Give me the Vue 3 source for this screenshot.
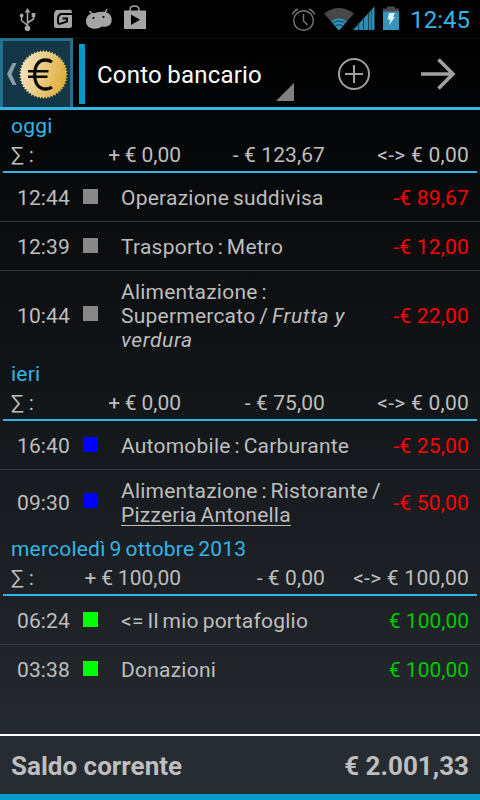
<script setup>
const groups = [
  {
    title: 'oggi', income: '+ € 0,00', expense: '- € 123,67', transfer: '<-> € 0,00',
    rows: [
      { time: '12:44', kind: 'grey', text: 'Operazione suddivisa', amount: '-€ 89,67' },
      { time: '12:39', kind: 'grey', text: 'Trasporto : Metro', amount: '-€ 12,00' },
      { time: '10:44', kind: 'grey', text: 'Alimentazione : Supermercato / ', note: 'Frutta y verdura', amount: '-€ 22,00' },
    ],
  },
  {
    title: 'ieri', income: '+ € 0,00', expense: '- € 75,00', transfer: '<-> € 0,00',
    rows: [
      { time: '16:40', kind: 'blue', text: 'Automobile : Carburante', amount: '-€ 25,00' },
      { time: '09:30', kind: 'blue', text: 'Alimentazione : Ristorante / ', payee: 'Pizzeria Antonella', amount: '-€ 50,00' },
    ],
  },
  {
    title: 'mercoledì 9 ottobre 2013', income: '+ € 100,00', expense: '- € 0,00', transfer: '<-> € 100,00',
    rows: [
      { time: '06:24', kind: 'green', text: '<= Il mio portafoglio', amount: '€ 100,00', positive: true },
      { time: '03:38', kind: 'green', text: 'Donazioni', amount: '€ 100,00', positive: true },
    ],
  },
]

const teeth = Array.from({ length: 96 }, (_, i) => {
  const angle = (i * Math.PI) / 48
  const radius = i % 2 ? 22.4 : 24.4
  return `${(24.5 + radius * Math.sin(angle)).toFixed(2)},${(24.5 - radius * Math.cos(angle)).toFixed(2)}`
}).join(' ')
</script>

<template>
  <div class="screen">
    <div class="status">
      <div class="notifications">
        <svg class="usb" width="18" height="26" viewBox="0 0 18 26">
          <path d="M8.500 4V21M2.500 10V13.500L8.500 18.500M14.500 9V12L8.500 16" fill="none" stroke="#a5a5a5" stroke-width="1.600" />
          <path d="M8.500 1L11.300 5.500H5.700Z" fill="#a5a5a5" />
          <circle cx="2.600" cy="8.500" r="1.900" fill="#a5a5a5" />
          <rect x="12.700" y="6" width="3.600" height="4" fill="#a5a5a5" />
          <circle cx="8.500" cy="21.300" r="2.800" fill="#a5a5a5" />
        </svg>
        <svg class="gadget" width="20" height="20" viewBox="0 0 20 20">
          <path d="M3 1L18 0.700L19 3V17Q19 19 17 19H3Q1 19 1 17V4Z" fill="#a5a5a5" />
          <path d="M19 5H8.500Q5.500 5.500 5 9V13Q5 15 7 14.800L14 12.500V9.500H9.500" fill="none" stroke="#000" stroke-width="1.900" />
        </svg>
        <svg class="droid" width="28" height="22" viewBox="0 0 28 22">
          <path d="M4.500 3L8 7M22 1L20 5" stroke="#a5a5a5" stroke-width="1.500" />
          <path d="M1 14C0.500 8.500 5 4.500 10 5Q14 3.500 19 3.800C25 4.500 27.500 9 26.500 14C25.500 18 21 19.500 17 18.500C12 22 2 22 1 14Z" fill="#a5a5a5" />
          <circle cx="8.500" cy="10" r="1.100" fill="#000" />
          <circle cx="18.500" cy="9" r="1.100" fill="#000" />
        </svg>
        <svg class="bag" width="24" height="26" viewBox="0 0 24 26">
          <path d="M7 8V6Q7 2 11.500 2Q16 2 16 6V8" fill="none" stroke="#a5a5a5" stroke-width="1.500" />
          <path d="M1 6.500H23V25H1Z" fill="#a5a5a5" />
          <path d="M8 10.500L17 15.800L8 21Z" fill="#000" />
        </svg>
      </div>
      <div class="indicators">
        <svg class="alarm" width="25" height="26" viewBox="0 0 25 26">
          <g fill="none" stroke="#777" stroke-width="1.400">
            <circle cx="12.500" cy="14.500" r="9.800" />
            <path d="M12.500 8V15L16.500 19M1.300 8.500Q3 4.500 7 3M23.700 8.500Q22 4.500 18 3" />
          </g>
        </svg>
        <svg class="wifi" width="30" height="24" viewBox="0 0 30 24">
          <path d="M0 6.500Q15 -4.500 30 6.500L15 23.500Z" fill="#484848" />
          <path d="M7 14.500Q15 8 23 14.500L15 23.500Z" fill="#2d8fb7" />
          <path d="M8.500 16.300Q15 11.500 21.500 16.300M11 19.300Q15 16 19 19.300" fill="none" stroke="#173d4d" stroke-width="1" />
        </svg>
        <svg class="signal" width="22" height="24" viewBox="0 0 22 24">
          <path d="M0 24L21.500 0.500V24Z" fill="#2d8fb7" />
          <path d="M5.500 17V24M10.500 12V24M15.500 7V24" stroke="#164356" stroke-width="1.200" />
          <path d="M18.300 4V24" stroke="#1b566e" stroke-width="1" />
        </svg>
        <svg class="battery" width="16" height="24" viewBox="0 0 16 24">
          <path d="M4 0.500H12V2.500H16V6H0V2.500H4Z" fill="#484848" />
          <path d="M0 5.500H16V24H0Z" fill="#3594ba" />
          <path d="M6 7H12L10 11H12L6 19L7.200 13.500H4.500Z" fill="#e4f3f9" />
        </svg>
        <span class="clock">12:45</span>
      </div>
    </div>

    <div class="actionbar">
      <div class="home">
        <svg class="back" width="10" height="22" viewBox="0 0 10 22">
          <path d="M5.500 0H9.500L4.500 11L9.500 22H5.500L0 11Z" fill="#8a9da6" />
        </svg>
        <svg class="coin" width="49" height="49" viewBox="0 0 49 49">
          <defs>
            <linearGradient id="gold" x1="0" y1="0.200" x2="1" y2="0.500">
              <stop offset="0" stop-color="#f6e5c3" />
              <stop offset="0.500" stop-color="#ebcb84" />
              <stop offset="1" stop-color="#dfad37" />
            </linearGradient>
          </defs>
          <polygon :points="teeth" fill="url(#gold)" />
          <path d="M33 12Q30 10 26.500 10C19 10 15.700 16 15.700 24.500C15.700 33 19.500 39 27 39Q30.500 39 33 37" fill="none" stroke="#090d07" stroke-width="3.300" />
          <path d="M9 21.300H29.500M9 26.700H28.500" stroke="#090d07" stroke-width="2.400" />
        </svg>
      </div>
      <div class="account-color"></div>
      <div class="spinner">
        <span class="account">Conto bancario</span>
        <svg class="corner" width="18" height="18" viewBox="0 0 18 18"><path d="M18 0V18H0Z" fill="#808080" /></svg>
      </div>
      <svg class="add" width="34" height="34" viewBox="0 0 34 34">
        <g fill="none" stroke="#a0a0a0" stroke-width="2">
          <circle cx="17" cy="17" r="15" />
          <path d="M8 17H26M17 8V26" />
        </g>
      </svg>
      <svg class="next" width="35" height="32" viewBox="0 0 35 32">
        <path d="M0 16H32M17.500 1.500L32 16L17.500 30.500" fill="none" stroke="#a0a0a0" stroke-width="3.600" />
      </svg>
    </div>

    <div class="list">
      <section v-for="group in groups" :key="group.title">
        <header class="group-head">
          <div class="date">{{ group.title }}</div>
          <div class="sums">
            <span class="sigma">∑ :</span>
            <span class="income">{{ group.income }}</span>
            <span>{{ group.expense }}</span>
            <span class="transfer">{{ group.transfer }}</span>
          </div>
        </header>
        <div v-for="row in group.rows" :key="row.time" class="row" :class="{ tall: row.note || row.payee }">
          <span class="time">{{ row.time }}</span>
          <i class="mark" :class="row.kind"></i>
          <span class="desc">{{ row.text }}<em v-if="row.note">{{ row.note }}</em><u v-if="row.payee">{{ row.payee }}</u></span>
          <span class="amount" :class="{ positive: row.positive }">{{ row.amount }}</span>
        </div>
      </section>
    </div>

    <footer class="balance">
      <span>Saldo corrente</span>
      <span>€ 2.001,33</span>
    </footer>
  </div>
</template>

<style>
body { background: #000; }
</style>

<style scoped>
.screen {
  box-sizing: border-box;
  width: 480px;
  height: 800px;
  display: flex;
  flex-direction: column;
  overflow: hidden;
  color: #bebebe;
  font: 21px/24px Roboto, sans-serif;
  background: linear-gradient(#000 38px, #040506 108px, #282d33 800px);
}
svg { display: block; flex: none; }
.status {
  height: 38px;
  flex: none;
  box-sizing: border-box;
  padding: 0 10px 0 19px;
  display: flex;
  justify-content: space-between;
  background: #000;
}
.notifications, .indicators { display: flex; align-items: flex-start; }
.usb { margin-top: 7px; }
.gadget { margin: 9px 0 0 16px; }
.droid { margin: 8px 0 0 12px; }
.bag { margin: 4px 0 0 10px; }
.alarm { margin: 6px 8px 0 0; }
.wifi { margin: 7px -1px 0 0; }
.signal { margin: 6px 8px 0 0; }
.battery { margin: 6px 11px 0 0; }
.clock { color: #33b5e5; font-size: 24px; line-height: 40px; width: 60px; text-align: right; }
.actionbar {
  height: 72px;
  flex: none;
  box-sizing: border-box;
  border-top: 1px solid #101010;
  border-bottom: 3px solid #33b5e5;
  display: flex;
  align-items: center;
}
.home {
  box-sizing: border-box;
  width: 73px;
  height: 69px;
  align-self: flex-start;
  margin-top: -1px;
  border: 3px solid #26708f;
  border-bottom-width: 0;
  background: #133747;
  display: flex;
  align-items: center;
  padding-left: 4px;
  gap: 2px;
}
.account-color { width: 6px; height: 60px; margin: 2px 12px 0 6px; background: #0099cc; }
.spinner { width: 197px; height: 68px; display: flex; justify-content: space-between; align-items: flex-end; }
.account { color: #fff; font-size: 24px; line-height: 64px; white-space: nowrap; letter-spacing: 0.2px; word-spacing: -0.7px; }
.corner { margin: 0 0 6px -10px; }
.add { margin: 2px 0 0 43px; }
.next { margin: 2px 0 0 50px; }
.list { flex: 1; min-height: 0; }
.group-head {
  box-sizing: border-box;
  height: 63px;
  margin: 0 3px;
  padding: 4px 8px 0;
  border-bottom: 2px solid #33b5e5;
}
.date { color: #33b5e5; line-height: 24px; letter-spacing: 0.2px; word-spacing: -1.4px; }
.sums {
  display: grid;
  grid-template-columns: 26px 144px 144px 144px;
  line-height: 24px;
  margin-top: 5px;
  text-align: right;
  white-space: nowrap;
  letter-spacing: 0.1px;
}
.sigma { text-align: left; }
.income { letter-spacing: 0; word-spacing: -0.4px; }
.transfer { letter-spacing: 0.25px; }
.row {
  box-sizing: border-box;
  min-height: 48px;
  padding: 8px 11px 7px 17px;
  display: grid;
  grid-template-columns: 66px 38px 264px 1fr;
  align-items: center;
}
.row + .row { min-height: 49px; border-top: 1px solid #35373a; }
.row.tall { padding-top: 9px; padding-bottom: 6px; }
.time { letter-spacing: 0.1px; }
.mark { width: 15px; height: 15px; margin-top: -2px; }
.tall .mark { margin-top: -5px; }
.grey { background: #888; }
.blue { background: #00f; }
.green { background: #0f0; }
.desc { letter-spacing: 0.23px; word-spacing: -1.6px; }
.desc em { letter-spacing: 0.6px; word-spacing: 0; }
.desc u { text-underline-offset: 3px; text-decoration-thickness: 1px; }
.amount { color: #f00; text-align: right; white-space: nowrap; letter-spacing: 0.2px; }
.amount.positive { color: #00c800; letter-spacing: 0; }
.balance {
  box-sizing: border-box;
  height: 66px;
  flex: none;
  padding: 2px 11px 0;
  border-top: 2px solid #fff;
  border-bottom: 6px solid #0099cc;
  display: flex;
  justify-content: space-between;
  align-items: center;
  font-size: 26px;
  font-weight: 700;
  background: #272b32;
}
</style>
